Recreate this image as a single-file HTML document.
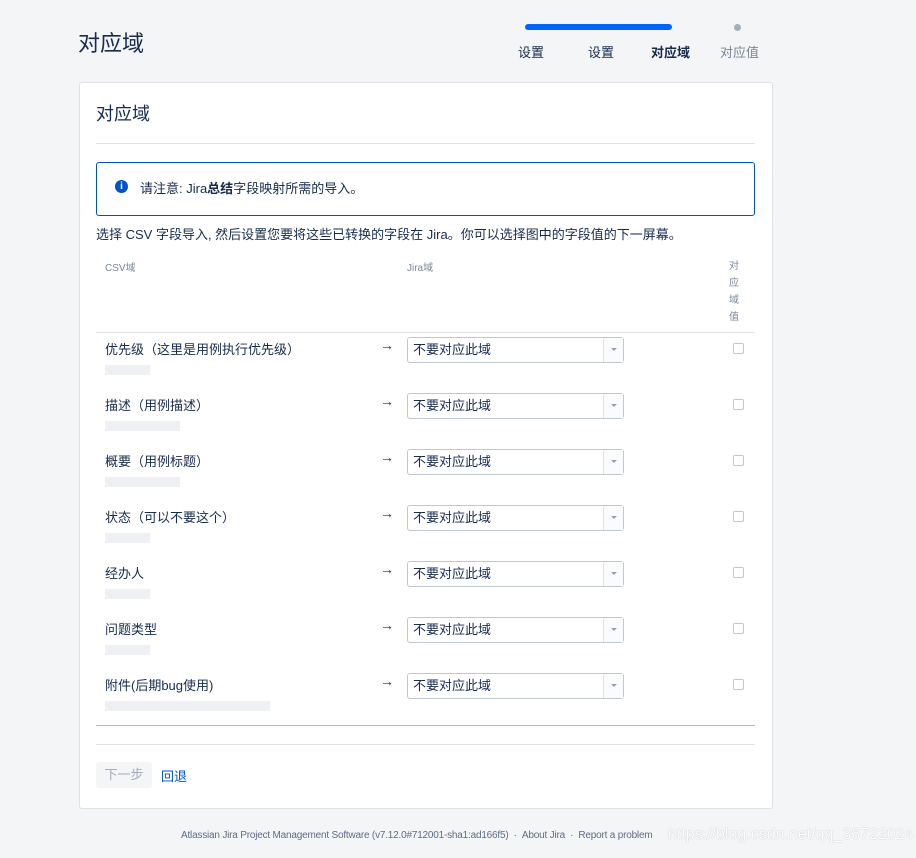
<!DOCTYPE html>
<html><head><meta charset="utf-8"><style>
*{margin:0;padding:0;box-sizing:border-box}
body{width:916px;height:858px;background:#f4f5f7;font-family:"Liberation Sans","Noto Sans CJK SC",sans-serif;color:#172b4d;position:relative;overflow:hidden}
.a{position:absolute;white-space:nowrap}
.card{position:absolute;left:79px;top:82px;width:694px;height:727px;background:#fff;border:1px solid #dfe1e6;border-radius:3px}
.sel{position:absolute;left:407px;width:217px;height:26px;border:1px solid #c1c7d0;border-radius:3px;background:#fff;font-size:13px;line-height:24px;padding-left:5px}
.sel i{position:absolute;right:0;top:0;width:20px;height:24px;border-left:1px solid #dfe1e6;background:#fafbfc}
.sel i:after{content:"";position:absolute;left:7px;top:10px;border-left:3px solid transparent;border-right:3px solid transparent;border-top:3px solid #97a0af}
.cb{position:absolute;left:733px;width:11px;height:11px;border:1px solid #c1c7d0;border-radius:2px;background:#fff}
.lbl{position:absolute;left:105px;font-size:13px}
.blur{position:absolute;left:105px;height:10px;background:#eef0f3}
.arr{position:absolute;left:380px;font-size:14px}
</style></head><body>
<div class="a" style="left:78px;top:26px;font-size:22px">对应域</div>
<div class="a" style="left:525px;top:24px;width:147px;height:6px;background:#0065ff;border-radius:3px"></div>
<div class="a" style="left:734px;top:24px;width:7px;height:7px;background:#a5adba;border-radius:50%"></div>
<div class="a" style="left:518px;top:42px;font-size:13px">设置</div>
<div class="a" style="left:588px;top:42px;font-size:13px">设置</div>
<div class="a" style="left:651px;top:42px;font-size:13px;font-weight:bold">对应域</div>
<div class="a" style="left:720px;top:42px;font-size:13px;color:#7a869a">对应值</div>
<div class="card"></div>
<div class="a" style="left:96px;top:100px;font-size:18px">对应域</div>
<div class="a" style="left:96px;top:143px;width:659px;height:1px;background:#dfe1e6"></div>
<div class="a" style="left:96px;top:162px;width:659px;height:54px;border:1px solid #0052cc;border-radius:3px"></div>
<div class="a" style="left:115px;top:180px;width:13px;height:13px;border-radius:50%;background:#0052cc;color:#fff;font-size:10px;font-weight:bold;text-align:center;line-height:13px">i</div>
<div class="a" style="left:140px;top:178px;font-size:13px">请注意: Jira<b>总结</b>字段映射所需的导入。</div>
<div class="a" style="left:96px;top:224px;font-size:13px">选择 CSV 字段导入, 然后设置您要将这些已转换的字段在 Jira。你可以选择图中的字段值的下一屏幕。</div>
<div class="a" style="left:105px;top:259px;font-size:10px;color:#7a869a">CSV域</div>
<div class="a" style="left:407px;top:259px;font-size:10px;color:#7a869a">Jira域</div>
<div class="a" style="left:729px;top:258px;font-size:10px;color:#7a869a;line-height:17px;width:12px;white-space:normal">对应域值</div>
<div class="a" style="left:96px;top:332px;width:659px;height:1px;background:#dfe1e6"></div>

<div class="lbl" style="top:339px">优先级（这里是用例执行优先级）</div><div class="blur" style="top:365px;width:45px"></div><div class="arr" style="top:337px">→</div><div class="sel" style="top:337px">不要对应此域<i></i></div><div class="cb" style="top:343px"></div>
<div class="lbl" style="top:395px">描述（用例描述）</div><div class="blur" style="top:421px;width:75px"></div><div class="arr" style="top:393px">→</div><div class="sel" style="top:393px">不要对应此域<i></i></div><div class="cb" style="top:399px"></div>
<div class="lbl" style="top:451px">概要（用例标题）</div><div class="blur" style="top:477px;width:75px"></div><div class="arr" style="top:449px">→</div><div class="sel" style="top:449px">不要对应此域<i></i></div><div class="cb" style="top:455px"></div>
<div class="lbl" style="top:507px">状态（可以不要这个）</div><div class="blur" style="top:533px;width:45px"></div><div class="arr" style="top:505px">→</div><div class="sel" style="top:505px">不要对应此域<i></i></div><div class="cb" style="top:511px"></div>
<div class="lbl" style="top:563px">经办人</div><div class="blur" style="top:589px;width:45px"></div><div class="arr" style="top:561px">→</div><div class="sel" style="top:561px">不要对应此域<i></i></div><div class="cb" style="top:567px"></div>
<div class="lbl" style="top:619px">问题类型</div><div class="blur" style="top:645px;width:45px"></div><div class="arr" style="top:617px">→</div><div class="sel" style="top:617px">不要对应此域<i></i></div><div class="cb" style="top:623px"></div>
<div class="lbl" style="top:675px">附件(后期bug使用)</div><div class="blur" style="top:701px;width:165px"></div><div class="arr" style="top:673px">→</div><div class="sel" style="top:673px">不要对应此域<i></i></div><div class="cb" style="top:679px"></div>

<div class="a" style="left:96px;top:725px;width:659px;height:1px;background:#b3b9c4"></div>
<div class="a" style="left:96px;top:744px;width:659px;height:1px;background:#dfe1e6"></div>
<div class="a" style="left:96px;top:762px;width:56px;height:26px;background:#f4f5f7;border-radius:3px;color:#a5adba;font-size:13px;line-height:26px;text-align:center">下一步</div>
<div class="a" style="left:161px;top:766px;font-size:13px;color:#0052cc">回退</div>
<div class="a" style="left:181px;top:830px;font-size:10px;color:#5e6c84;letter-spacing:-0.2px">Atlassian Jira Project Management Software (v7.12.0#712001-sha1:ad166f5) &nbsp;· &nbsp;About Jira &nbsp;· &nbsp;Report a problem</div>
<div class="a" style="left:668px;top:826px;font-size:16px;color:#fff;opacity:.85;text-shadow:0 0 1px #999">https://blog.csdn.net/qq_36722024</div>
</body></html>
